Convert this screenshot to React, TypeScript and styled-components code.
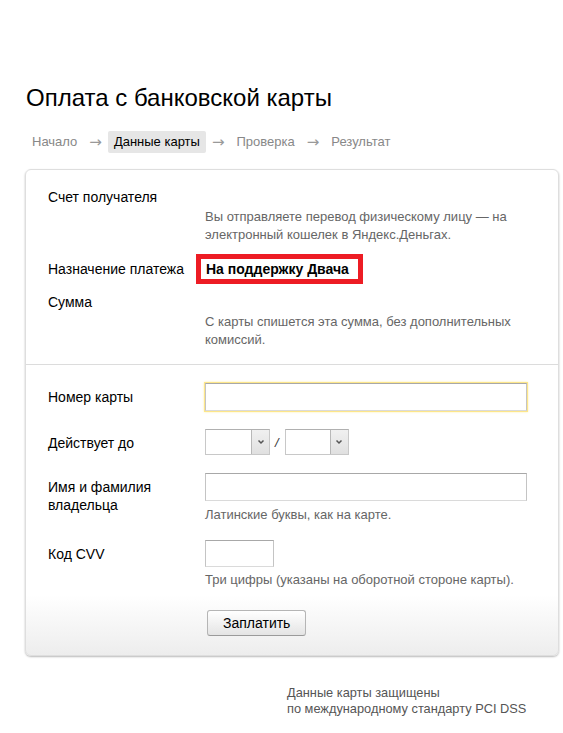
import React from "react";
import styled, { createGlobalStyle } from "styled-components";

const Global = createGlobalStyle`
  html, body { margin: 0; padding: 0; background: #fff; }
  body { font-family: "Liberation Sans", Arial, sans-serif; font-size: 13px; color: #000; }
  * { box-sizing: border-box; }
`;

const Page = styled.div`
  width: 534px;
  margin-left: 25px;
  padding-top: 83px;
`;

const Title = styled.h1`
  margin: 0 0 0 1px;
  font-size: 24px;
  line-height: 30px;
  font-weight: normal;
  color: #000;
`;

const Crumbs = styled.nav`
  display: flex;
  align-items: center;
  margin-top: 18px;
  height: 22px;
  padding-left: 1px;
`;

const Crumb = styled.span<{ $active?: boolean }>`
  display: inline-block;
  height: 22px;
  line-height: 22px;
  padding: 0 6px;
  border-radius: 2px;
  color: ${(p) => (p.$active ? "#000" : "#888")};
  background: ${(p) => (p.$active ? "#e6e6e6" : "transparent")};
`;

const Arrow = styled.span`
  font-family: "DejaVu Sans", sans-serif;
  font-size: 15px;
  color: #999;
  margin: 0 6px 0 6px;
  line-height: 22px;
`;

const Card = styled.div`
  margin-top: 16px;
  border: 1px solid #dedede;
  border-radius: 6px;
  background: linear-gradient(to bottom, #fff calc(100% - 60px), #ededed 100%);
  box-shadow: 0 1px 2px rgba(0, 0, 0, 0.28);
`;

const Section = styled.div<{ $pt: number; $pb: number }>`
  padding: ${(p) => p.$pt}px 22px ${(p) => p.$pb}px 22px;
`;

const Divider = styled.div`
  height: 1px;
  background: #dcdcdc;
`;

const Row = styled.div<{ $mt?: number; $center?: boolean }>`
  display: grid;
  grid-template-columns: 157px 1fr;
  align-items: ${(p) => (p.$center ? "center" : "start")};
  margin-top: ${(p) => p.$mt ?? 0}px;
`;

const Label = styled.div<{ $pt?: number }>`
  font-size: 14px;
  line-height: 18px;
  padding-top: ${(p) => p.$pt ?? 0}px;
  color: #000;
`;

const Value = styled.div`
  display: flex;
  flex-direction: column;
  align-items: flex-start;
  min-height: 18px;
`;

const Empty = styled.div`
  height: 18px;
`;

const Note = styled.div<{ $mt?: number }>`
  color: #666;
  line-height: 18px;
  margin-top: ${(p) => p.$mt ?? 2}px;
`;

const Highlight = styled.div`
  margin-left: -9px;
  height: 30px;
  border: 5px solid #ed1c24;
  padding: 0 9px 0 5px;
  font-size: 14px;
  font-weight: bold;
  line-height: 20px;
  color: #000;
`;

const Input = styled.input<{ $w?: number; $h?: number; $focus?: boolean }>`
  display: block;
  width: ${(p) => (p.$w ? `${p.$w}px` : "322px")};
  height: ${(p) => p.$h ?? 28}px;
  margin: 0;
  border: 1px solid #c4c4c4;
  border-top-color: #a8a8a8;
  border-bottom-color: #dadada;
  background: #fff;
  outline: none;
  font: inherit;
  box-shadow: ${(p) => (p.$focus ? "0 0 0 1px #fde68a, 0 0 2px 1px #fff0a8" : "none")};
`;

const Expiry = styled.div`
  display: flex;
  align-items: center;
`;

const Select = styled.div<{ $w: number }>`
  display: flex;
  width: ${(p) => p.$w}px;
  height: 26px;
  border: 1px solid #c8c8c8;
  border-top-color: #b0b0b0;
  background: #fff;
`;

const SelectField = styled.div`
  flex: 1;
`;

const SelectButton = styled.div`
  width: 18px;
  display: flex;
  align-items: center;
  justify-content: center;
  border-left: 1px solid #b8b8b8;
  background: linear-gradient(to bottom, #f0f0f0, #e0e0e0);
`;

const Slash = styled.span`
  margin: 0 6px 0 5px;
  color: #333;
  font-style: italic;
`;

const PayButton = styled.button`
  display: block;
  height: 26px;
  padding: 0 15px;
  margin: 21px 0 0 2px;
  border: 1px solid #b5b5b5;
  border-bottom-color: #9a9a9a;
  border-radius: 3px;
  background: linear-gradient(to bottom, #ffffff, #e4e4e4);
  font-family: "Liberation Sans", Arial, sans-serif;
  font-size: 14px;
  color: #000;
  cursor: pointer;
`;

const Footer = styled.div`
  margin: 29px 0 0 262px;
  color: #555;
  font-size: 12.8px;
  line-height: 16px;
`;

const Chevron = () => (
  <svg width="8" height="6" viewBox="0 0 8 6">
    <polyline points="1.5,1.5 4,4 6.5,1.5" fill="none" stroke="#555" strokeWidth="1.5" />
  </svg>
);

export default function App() {
  return (
    <>
      <Global />
      <Page>
        <Title>Оплата с банковской карты</Title>
        <Crumbs>
          <Crumb>Начало</Crumb>
          <Arrow>→</Arrow>
          <Crumb $active>Данные карты</Crumb>
          <Arrow>→</Arrow>
          <Crumb>Проверка</Crumb>
          <Arrow>→</Arrow>
          <Crumb>Результат</Crumb>
        </Crumbs>
        <Card>
          <Section $pt={18} $pb={15}>
            <Row>
              <Label>Счет получателя</Label>
              <Value>
                <Empty />
                <Note>
                  Вы отправляете перевод физическому лицу — на
                  <br />
                  электронный кошелек в Яндекс.Деньгах.
                </Note>
              </Value>
            </Row>
            <Row $mt={10} $center>
              <Label>Назначение платежа</Label>
              <Value>
                <Highlight>На поддержку Двача</Highlight>
              </Value>
            </Row>
            <Row $mt={9}>
              <Label>Сумма</Label>
              <Value>
                <Empty />
                <Note>
                  С карты спишется эта сумма, без дополнительных
                  <br />
                  комиссий.
                </Note>
              </Value>
            </Row>
          </Section>
          <Divider />
          <Section $pt={18} $pb={19}>
            <Row>
              <Label $pt={5}>Номер карты</Label>
              <Value>
                <Input $focus />
              </Value>
            </Row>
            <Row $mt={18}>
              <Label $pt={5}>Действует до</Label>
              <Value>
                <Expiry>
                  <Select $w={65}>
                    <SelectField />
                    <SelectButton>
                      <Chevron />
                    </SelectButton>
                  </Select>
                  <Slash>/</Slash>
                  <Select $w={64}>
                    <SelectField />
                    <SelectButton>
                      <Chevron />
                    </SelectButton>
                  </Select>
                </Expiry>
              </Value>
            </Row>
            <Row $mt={18}>
              <Label $pt={5}>
                Имя и фамилия
                <br />
                владельца
              </Label>
              <Value>
                <Input />
                <Note $mt={5}>Латинские буквы, как на карте.</Note>
              </Value>
            </Row>
            <Row $mt={16}>
              <Label $pt={5}>Код CVV</Label>
              <Value>
                <Input $w={69} $h={27} />
                <Note $mt={4}>Три цифры (указаны на оборотной стороне карты).</Note>
                <PayButton>Заплатить</PayButton>
              </Value>
            </Row>
          </Section>
        </Card>
        <Footer>
          Данные карты защищены
          <br />
          по международному стандарту PCI DSS
        </Footer>
      </Page>
    </>
  );
}
